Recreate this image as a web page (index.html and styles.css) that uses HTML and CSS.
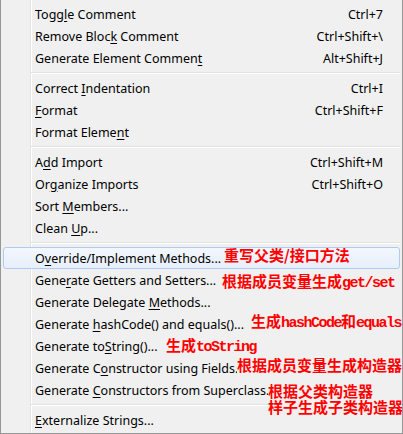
FILE: index.html
```html
<!DOCTYPE html>
<html>
<head>
<meta charset="utf-8">
<link rel="stylesheet" href="styles.css">
</head>
<body>
<div class="menu">
  <div class="item"><span class="label">Togg<u>l</u>e Comment</span><span class="key">Ctrl+7</span></div>
  <div class="item"><span class="label">Remove Bloc<u>k</u> Comment</span><span class="key">Ctrl+Shift+\</span></div>
  <div class="item"><span class="label">Generate Element Commen<u>t</u></span><span class="key">Alt+Shift+J</span></div>
  <div class="sep"></div>
  <div class="item"><span class="label">Correct <u>I</u>ndentation</span><span class="key">Ctrl+I</span></div>
  <div class="item"><span class="label"><u>F</u>ormat</span><span class="key">Ctrl+Shift+F</span></div>
  <div class="item"><span class="label">Format Eleme<u>n</u>t</span></div>
  <div class="sep"></div>
  <div class="item"><span class="label">A<u>d</u>d Import</span><span class="key">Ctrl+Shift+M</span></div>
  <div class="item"><span class="label">Or<u>g</u>anize Imports</span><span class="key">Ctrl+Shift+O</span></div>
  <div class="item"><span class="label">Sort <u>M</u>embers...</span></div>
  <div class="item"><span class="label">Clean <u>U</u>p...</span></div>
  <div class="sep"></div>
  <div class="item hot"><span class="label">O<u>v</u>erride/Implement Methods...</span><span class="note n1">重写父类/接口方法</span></div>
  <div class="item"><span class="label">Gene<u>r</u>ate Getters and Setters...</span><span class="note n2">根据成员变量生成<span class="lat">get/set</span></span></div>
  <div class="item"><span class="label">Generate Delegate <u>M</u>ethods...</span></div>
  <div class="item"><span class="label">Generate <u>h</u>ashCode() and equals()...</span><span class="note n3">生成<span class="lat">hashCode</span>和<span class="lat">equals</span></span></div>
  <div class="item"><span class="label">Generate to<u>S</u>tring()...</span><span class="note n4">生成<span class="lat">toString</span></span></div>
  <div class="item"><span class="label">Generate C<u>o</u>nstructor using Fields...</span><span class="note n5">根据成员变量生成构造器</span></div>
  <div class="item"><span class="label">Generate <u>C</u>onstructors from Superclass...</span><span class="note n6">根据父类构造器<br>样子生成子类构造器</span></div>
  <div class="sep"></div>
  <div class="item"><span class="label"><u>E</u>xternalize Strings...</span></div>
</div>
</body>
</html>
```

FILE: styles.css
```css
html, body {
  margin: 0;
  padding: 0;
  background: #f0f0f0;
}

.menu {
  position: relative;
  box-sizing: border-box;
  width: 403px;
  height: 434px;
  padding: 3px 2px 0 2px;
  border: 1px solid #979797;
  border-top: none;
  background-color: #f0f0f0;
  background-image: linear-gradient(to right,
    transparent 29px, #e2e3e3 29px, #e2e3e3 30px,
    #ffffff 30px, #ffffff 31px, transparent 31px);
  font-family: "Noto Sans", "Noto Sans CJK SC", sans-serif;
  font-size: 12.5px;
  color: #000;
  overflow: hidden;
}

.item {
  position: relative;
  box-sizing: border-box;
  height: 22px;
  display: flex;
  align-items: center;
  padding: 0 16px 0 31px;
  border: 1px solid transparent;
  border-radius: 3px;
  white-space: nowrap;
}

.item u {
  text-decoration: underline;
  text-underline-offset: 2px;
}

.item.hot {
  border-color: #aeccf3;
  background: linear-gradient(to bottom, #f3f7fd, #e7effb);
}

.key {
  margin-left: auto;
}

.sep {
  height: 8px;
  margin-left: 28px;
  background-image: linear-gradient(to bottom,
    transparent 3px, #e2e3e3 3px, #e2e3e3 4px,
    #ffffff 4px, #ffffff 5px, transparent 5px);
}

.note {
  position: absolute;
  font-family: "Noto Sans CJK SC", sans-serif;
  font-size: 15px;
  font-weight: 700;
  line-height: 16px;
  color: #ff0000;
  background: #f0f0f0;
  white-space: nowrap;
}

.hot .note {
  background: transparent;
}

.lat {
  font-family: "Liberation Mono", monospace;
  font-weight: 700;
  letter-spacing: -1.5px;
}

.n1 { left: 220px; top: -1px; }
.n2 { left: 218px; top: 3px; }
.n3 { left: 247px; top: -1px; }
.n4 { left: 162px; top: 1px; }
.n5 { left: 233px; top: -1px; }
.n6 { left: 264px; top: 3px; }
```
